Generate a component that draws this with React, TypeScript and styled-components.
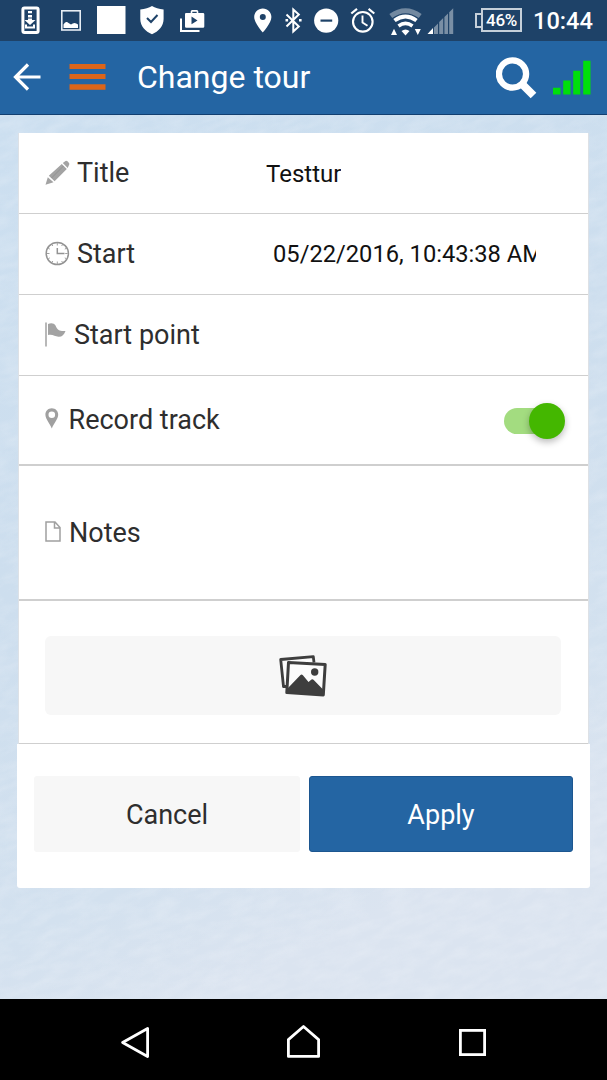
import React from "react";
import styled, { createGlobalStyle } from "styled-components";

const GlobalStyle = createGlobalStyle`
  * { box-sizing: border-box; }
  body { margin: 0; background: #000; font-family: Roboto, "Noto Sans", sans-serif; }
  svg { display: block; flex: none; }
  button { font-family: inherit; border: 0; padding: 0; cursor: pointer; }
`;

const Screen = styled.div`
  display: flex;
  flex-direction: column;
  width: 607px;
  height: 1080px;
  overflow: hidden;
`;

const StatusBar = styled.div`
  display: flex;
  flex: none;
  height: 41px;
  background: #1e4268;
  color: #fff;
`;

const Glyph = styled.svg<{ $gap: number; $lift?: number }>`
  margin-left: ${(p) => p.$gap}px;
  margin-bottom: ${(p) => p.$lift ?? 0}px;
`;

const RowIcon = styled.svg<{ $lift?: number }>`
  margin-bottom: ${(p) => p.$lift ?? 0}px;
`;

const Battery = styled.div`
  display: flex;
  align-items: center;
  margin: 8px 0 0 21px;
  height: 24px;
`;

const BatteryTip = styled.span`
  width: 6px;
  height: 15px;
  border: 2px solid #c6d0da;
  border-right: 0;
`;

const BatteryBody = styled.span`
  display: flex;
  align-items: center;
  justify-content: center;
  width: 41px;
  height: 24px;
  border: 2px solid #c6d0da;
  font-size: 17px;
  font-weight: 500;
  letter-spacing: -0.3px;
`;

const Clock = styled.span`
  margin-left: 11px;
  font-size: 23.6px;
  font-weight: 500;
  line-height: 42px;
`;

const Header = styled.header`
  display: flex;
  align-items: center;
  flex: none;
  height: 74px;
  background: #2465a3;
  border-bottom: 1px solid #123f70;
  color: #fff;
`;

const HeaderTitle = styled.h1`
  margin: 0 0 2px 31px;
  width: 359px;
  font-size: 32px;
  font-weight: 400;
  line-height: 72px;
  white-space: nowrap;
`;

const Content = styled.main`
  position: relative;
  flex: 1;
  padding: 18px 17px 0;
  background: #d0e0ef;
`;

const Snow = styled.svg`
  position: absolute;
  inset: 0;
`;

const Form = styled.form`
  position: relative;
  display: flex;
  flex-direction: column;
  width: 573px;
`;

const Fields = styled.div`
  margin: 0 1px 0 1px;
  background: #fff;
  border-left: 1px solid #dde1e6;
  border-right: 1px solid #dde1e6;
`;

const Row = styled.div<{ $height: number; $line?: number; $drop?: number }>`
  display: flex;
  align-items: center;
  height: ${(p) => p.$height}px;
  padding: ${(p) => p.$drop ?? 0}px 23px 0 26px;
  border-bottom: ${(p) => p.$line ?? 1}px solid #cfcfcf;
`;

const Label = styled.label<{ $gap: number; $width?: number }>`
  margin-left: ${(p) => p.$gap}px;
  width: ${(p) => (p.$width ? p.$width + "px" : "auto")};
  font-size: 27px;
  line-height: 32px;
  color: #2e2e2e;
  white-space: nowrap;
`;

const Value = styled.span<{ $width?: number; $drop?: number }>`
  width: ${(p) => (p.$width ? p.$width + "px" : "auto")};
  margin-top: ${(p) => p.$drop ?? 0}px;
  overflow: hidden;
  font-size: ${(p) => (p.$width ? 23.7 : 24)}px;
  line-height: 32px;
  color: #111;
  white-space: nowrap;
`;

const Toggle = styled.span`
  display: flex;
  align-items: center;
  justify-content: flex-end;
  width: 57px;
  height: 26px;
  margin: 1px 4px 0 auto;
  border-radius: 13px;
  background: #a3dc80;
`;

const Knob = styled.span`
  flex: none;
  width: 36px;
  height: 36px;
  margin-right: -4px;
  border-radius: 50%;
  background: #44b700;
  box-shadow: 0 3px 7px rgba(0, 0, 0, 0.28);
`;

const PhotoButton = styled.button`
  display: flex;
  align-items: center;
  justify-content: center;
  width: 516px;
  height: 79px;
  border-radius: 6px;
  background: #f7f7f7;
`;

const Actions = styled.div`
  display: grid;
  grid-template-columns: 266px 264px;
  gap: 9px;
  height: 144px;
  padding: 32px 17px 36px 17px;
  background: #fff;
  border-radius: 0 0 3px 3px;
`;

const ActionButton = styled.button<{ $primary?: boolean }>`
  border-radius: 3px;
  padding-top: 2px;
  font-size: 27px;
  background: ${(p) => (p.$primary ? "#2465a3" : "#f7f7f7")};
  color: ${(p) => (p.$primary ? "#fff" : "#2e2e2e")};
  border: ${(p) => (p.$primary ? "1px solid #1c5690" : "0")};
`;

const NavBar = styled.nav`
  display: flex;
  flex: none;
  height: 81px;
  background: #000;
`;

const StatusIcons = () => (
  <>
    <Glyph $gap={21} width="20" height="41" viewBox="21 0 20 41">
      <rect x="22.9" y="8" width="15.2" height="24.6" rx="1.5" fill="none" stroke="#fff" strokeWidth="3" />
      <path d="M28 11h4v2.300h-4zM28 15h4v2.500h-4zM28 18.500h4v1.500h3.500L30 25l-5.500-5H28zM25 24.500h2v2h6v-2h2v4H25z" fill="#fff" />
    </Glyph>
    <Glyph $gap={20} width="20" height="41" viewBox="61 0 20 41">
      <rect x="61.8" y="10.8" width="18.400" height="19.200" fill="none" stroke="#e6edf4" strokeWidth="1.600" />
      <path d="M63.500 28v-3.500l2.500-2.500 3.500 2.500h4l2-1 2.500 1V28zM63.500 24.500q2.500-4 5-1.500l2.500 1.500q3.500-3 7 0z" fill="#fff" />
    </Glyph>
    <Glyph $gap={16} width="29" height="41" viewBox="97 0 29 41">
      <path d="M97 6h28.500v28H97z" fill="#fff" />
    </Glyph>
    <Glyph $gap={14} width="24" height="41" viewBox="140 0 24 41">
      <path d="M152 6c3 2 7 3 11.600 3.500V19c0 7-5 12.500-11.600 15.300C145.400 31.500 140.300 26 140.300 19V9.500C145 9 149 8 152 6z" fill="#fff" />
      <path d="M147 18l4 4 6.500-7" fill="none" stroke="#1e4268" strokeWidth="2" />
    </Glyph>
    <Glyph $gap={16} width="25" height="41" viewBox="180 0 25 41">
      <path d="M181 18.500V31h18.500" fill="none" stroke="#fff" strokeWidth="2" />
      <path fillRule="evenodd" d="M186 13h4.700v-1.500q0-1.500 1.500-1.500h4.600q1.500 0 1.500 1.500V13h4.700q1.300 0 1.300 1.300v12.200q0 1.300-1.300 1.300h-16.700q-1.300 0-1.300-1.300V14.300Q185 13 186 13zM192.300 13h4.400v-1.300h-4.400zM191.500 16.500v7.800l6-3.900z" fill="#fff" />
    </Glyph>
    <Glyph $gap={49} width="18" height="41" viewBox="254 0 18 41">
      <path fillRule="evenodd" d="M262.800 8.500c-4.900 0-8.600 3.700-8.600 8.500 0 6 8.600 15.500 8.600 15.500s8.600-9.500 8.600-15.500c0-4.800-3.700-8.500-8.600-8.500zm0 5.600a3 3 0 1 1 0 6 3 3 0 0 1 0-6z" fill="#fff" />
    </Glyph>
    <Glyph $gap={13} width="17" height="41" viewBox="285 0 17 41">
      <path d="M286.500 14.500l12.300 12-5.500 5V9.500l5.500 5-12.300 12" fill="none" stroke="#fff" strokeWidth="2" />
      <path d="M285.500 19h2.600v2.600h-2.600zM299 19h2.600v2.600H299z" fill="#fff" />
    </Glyph>
    <Glyph $gap={12} width="25" height="41" viewBox="314 0 25 41">
      <circle cx="326.200" cy="20.600" r="12.100" fill="#fff" />
      <path d="M320.500 20.600h11.700" stroke="#1e4268" strokeWidth="2.200" />
    </Glyph>
    <Glyph $gap={11} width="26" height="41" viewBox="350 0 26 41">
      <circle cx="362.800" cy="21.800" r="9.800" fill="none" stroke="#fff" strokeWidth="2.100" />
      <path d="M351.300 13.500l5.700-4.700M374.300 13.500l-5.700-4.700" stroke="#fff" strokeWidth="2.200" />
      <path d="M362.500 15.500v7l5 3.200" fill="none" stroke="#fff" strokeWidth="1.900" />
    </Glyph>
    <Glyph $gap={13} width="33" height="41" viewBox="389 0 33 41">
      <path d="M390.800 16Q405.500 5.500 420.200 16" fill="none" stroke="#7389a0" strokeWidth="5" />
      <path d="M394.500 20.500Q405.500 12.500 416.500 20.500" fill="none" stroke="#fff" strokeWidth="4" />
      <path d="M398.500 26Q405.500 20.800 412.500 26" fill="none" stroke="#fff" strokeWidth="3.500" />
      <path d="M401.500 31q4-3 8 0l-4 4.500zM391 35l3-6.300 3 6.300zM414.800 29h6l-3 6z" fill="#fff" />
    </Glyph>
    <Glyph $gap={5} width="27" height="41" viewBox="427 0 27 41">
      <path d="M434 27.500l4-4V34h-4zM439.200 22l4-4v16h-4zM444.400 17l3.600-3.600V34h-3.600zM449.200 12.200l4-4V34h-4z" fill="#7a8fa5" />
      <path d="M427.500 34l5.500-6v6z" fill="#fff" />
    </Glyph>
  </>
);

const BackArrow = () => (
  <Glyph $gap={13} $lift={2} width="29" height="30" viewBox="13 62.500 29 30">
    <path d="M40.500 77.500H16M28 65L15.500 77.500 28 90" fill="none" stroke="#fff" strokeWidth="3.200" />
  </Glyph>
);

const MenuBars = () => (
  <Glyph $gap={27} $lift={1} width="37" height="26" viewBox="0 0 37 26">
    <path d="M.5 0h36v5H.5zM.5 10h36v5H.5zM.5 20.200h36v5.500H.5z" fill="#dc6519" />
  </Glyph>
);

const SearchGlass = () => (
  <Glyph $gap={0} width="41" height="42" viewBox="0 0 41 42">
    <circle cx="16.500" cy="17" r="13.600" fill="none" stroke="#fff" strokeWidth="6.300" />
    <path d="M26 27l11.500 11.500" stroke="#fff" strokeWidth="8" />
  </Glyph>
);

const GpsBars = () => (
  <Glyph $gap={16} width="38" height="35" viewBox="0 0 38 35">
    <path d="M0 27.700h7.500V34.500H0zM10.200 20.500h7.300v14h-7.300zM20.200 10.700h7v23.800h-7zM30.200 .7H37.500v33.800h-7.300z" fill="#00df0b" />
  </Glyph>
);

const PencilIcon = () => (
  <RowIcon $lift={1} width="25" height="26" viewBox="0 0 25 26">
    <path d="M.5 24.800L2.800 17.200l5.700 5zM3.800 15.800L16.800 4l5 5L9.600 21.300zM17.800 3L20.500.9q1-.6 2 .4l1.500 1.800q.8 1 0 2L22.700 7.900z" fill="#a3a3a3" />
    <path d="M6.500 18L18.500 6" stroke="#8d8d8d" strokeWidth=".8" />
  </RowIcon>
);

const ClockIcon = () => (
  <RowIcon $lift={2} width="25" height="25" viewBox="0 0 25 25">
    <circle cx="12.300" cy="12.500" r="11.100" fill="none" stroke="#939393" strokeWidth="1.500" />
    <path d="M12.300 7v5.500h7.200" fill="none" stroke="#939393" strokeWidth="1.500" />
    <path d="M12.300 2v2.500M12.300 20.500V23M2 12.500h2.500M20.200 12.500h2.500M7 3.500l.8 1.500M17.500 3.500l-.8 1.500M3.300 7.300l1.500.8M21.300 7.300l-1.500.8M3.300 17.700l1.500-.8M21.300 17.700l-1.500-.8M7 21.500l.8-1.500M17.500 21.500l-.8-1.500" stroke="#a0a0a0" strokeWidth="1" />
  </RowIcon>
);

const FlagIcon = () => (
  <RowIcon $lift={2} width="21" height="25" viewBox="0 0 21 25">
    <path d="M1 .5v24" stroke="#a0a0a0" strokeWidth="1.500" />
    <path d="M3 2C6 .5 9 1 10.500 3.500 12.500 8.500 15.500 9.500 20.500 9 19 13 17 15 13.500 14.800 9.500 14.500 8 12 3 13z" fill="#a3a3a3" />
  </RowIcon>
);

const PinIcon = () => (
  <RowIcon $lift={3} width="14" height="21" viewBox="0 0 14 21">
    <path fillRule="evenodd" d="M6.800.3C3 .3.400 3.200.400 6.700c0 4.300 4.400 8.300 6.400 13.800 2-5.500 6.400-9.500 6.400-13.800 0-3.500-2.600-6.400-6.400-6.400zm0 3.200a3.300 3.300 0 1 1 0 6.600 3.300 3.300 0 0 1 0-6.600z" fill="#a0a0a0" />
  </RowIcon>
);

const PageIcon = () => (
  <RowIcon $lift={2} width="16" height="21" viewBox="0 0 16 21">
    <path d="M1 1h9l5 5.500V20H1zM9.500 1v6H15" fill="none" stroke="#a0a0a0" strokeWidth="1.500" />
  </RowIcon>
);

const PhotosIcon = () => (
  <RowIcon width="48" height="42" viewBox="0 0 48 42">
    <path d="M35 7.500L34.300 1.700 1.700 4.500 4.500 31.500H8" fill="#fcfcfc" stroke="#3e3e3e" strokeWidth="2.800" strokeLinejoin="round" />
    <path d="M9.500 7.500L46.200 9.500 44.300 40 7.800 37.500z" fill="#fcfcfc" stroke="#3e3e3e" strokeWidth="3" strokeLinejoin="round" />
    <path d="M9 33L21.500 20q1.200-1 2.400.3L29.500 27l3-2.500q1-.8 2 .2L44.500 35v5L8 37.500z" fill="#3e3e3e" />
    <circle cx="35.700" cy="17" r="3.700" fill="#3e3e3e" />
  </RowIcon>
);

const SnowBackdrop = () => (
  <Snow width="607" height="884" viewBox="0 0 607 884">
    <defs>
      <linearGradient id="sky" x1="0" y1="0" x2="0.35" y2="1">
        <stop offset="0" stopColor="#ccdff0" />
        <stop offset="0.5" stopColor="#cddeee" />
        <stop offset="0.84" stopColor="#d3e1ef" />
        <stop offset="1" stopColor="#dbe4f0" />
      </linearGradient>
      <filter id="grain" x="0" y="0" width="100%" height="100%">
        <feTurbulence type="fractalNoise" baseFrequency="0.04 0.11" numOctaves="4" seed="4" />
        <feColorMatrix values="0 0 0 0 0.95  0 0 0 0 0.96  0 0 0 0 0.98  0.9 0 0 0 -0.3" />
      </filter>
    </defs>
    <rect width="607" height="884" fill="url(#sky)" />
    <g transform="rotate(-18 300 440)">
      <rect x="-160" y="-160" width="920" height="1200" filter="url(#grain)" opacity="0.4" />
    </g>
  </Snow>
);

export default function App() {
  return (
    <Screen>
      <GlobalStyle />
      <StatusBar>
        <StatusIcons />
        <Battery>
          <BatteryTip />
          <BatteryBody>46%</BatteryBody>
        </Battery>
        <Clock>10:44</Clock>
      </StatusBar>
      <Header>
        <BackArrow />
        <MenuBars />
        <HeaderTitle>Change tour</HeaderTitle>
        <SearchGlass />
        <GpsBars />
      </Header>
      <Content>
        <SnowBackdrop />
        <Form>
          <Fields>
            <Row $height={81}>
              <PencilIcon />
              <Label $gap={7} $width={189}>Title</Label>
              <Value $drop={1}>Testtur</Value>
            </Row>
            <Row $height={81}>
              <ClockIcon />
              <Label $gap={7} $width={196}>Start</Label>
              <Value $width={263}>05/22/2016, 10:43:38 AM</Value>
            </Row>
            <Row $height={81}>
              <FlagIcon />
              <Label $gap={8}>Start point</Label>
            </Row>
            <Row $height={90} $line={2}>
              <PinIcon />
              <Label $gap={9.500}>Record track</Label>
              <Toggle>
                <Knob />
              </Toggle>
            </Row>
            <Row $height={135} $line={2}>
              <PageIcon />
              <Label $gap={8}>Notes</Label>
            </Row>
            <Row $height={143} $drop={7}>
              <PhotoButton type="button" aria-label="Add photos">
                <PhotosIcon />
              </PhotoButton>
            </Row>
          </Fields>
          <Actions>
            <ActionButton type="button">Cancel</ActionButton>
            <ActionButton type="button" $primary>Apply</ActionButton>
          </Actions>
        </Form>
      </Content>
      <NavBar>
        <Glyph $gap={120} width="30" height="81" viewBox="120 999 30 81">
          <path d="M147.600 1028.500v28l-25-14z" fill="none" stroke="#fff" strokeWidth="2.800" strokeLinejoin="round" />
        </Glyph>
        <Glyph $gap={136} width="35" height="81" viewBox="286 999 35 81">
          <path d="M288.400 1056.400v-16.800l15.100-13.100 15.100 13.100v16.800z" fill="none" stroke="#fff" strokeWidth="2.800" strokeLinejoin="round" />
        </Glyph>
        <Glyph $gap={137} width="28" height="81" viewBox="458 999 28 81">
          <rect x="460.400" y="1030.400" width="24.200" height="24.200" fill="none" stroke="#fff" strokeWidth="2.800" />
        </Glyph>
      </NavBar>
    </Screen>
  );
}
